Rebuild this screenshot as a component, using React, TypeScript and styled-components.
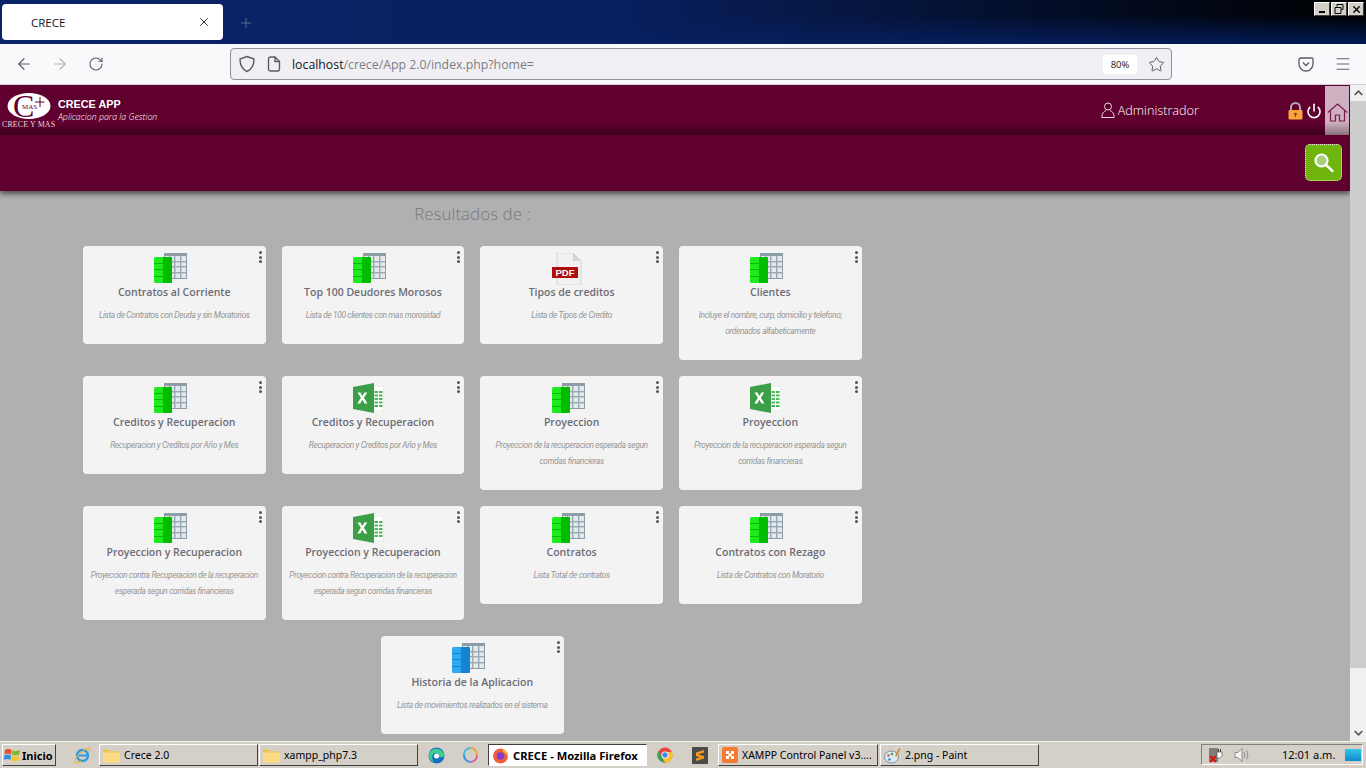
import React from "react";
import styled, { createGlobalStyle } from "styled-components";
import { ArrowLeft, ArrowRight, RotateCw, Star, X, Plus, Menu, Power } from "lucide-react";

const GlobalStyle = createGlobalStyle`
  html, body {
    margin: 0;
    padding: 0;
    width: 1366px;
    height: 768px;
    overflow: hidden;
    font-family: "Open Sans", sans-serif;
  }
  * { box-sizing: border-box; }
`;

const Screen = styled.div`
  width: 1366px;
  height: 768px;
  display: flex;
  flex-direction: column;
  overflow: hidden;
`;

/* firefox chrome */
const TabStrip = styled.div`
  height: 44px;
  display: flex;
  background:
    linear-gradient(to right, #0a246a 0%, #08205f 45%, rgba(6, 28, 88, 0) 100%),
    linear-gradient(180deg, #000 0%, #000 35%, #011b55 100%);
`;

const Tab = styled.div`
  width: 221px;
  height: 36px;
  margin: 4px 0 0 2px;
  padding: 0 12px 0 29px;
  background: #fff;
  border-radius: 4px;
  display: flex;
  align-items: center;
  justify-content: space-between;
  font-size: 11.5px;
  color: #15141a;
`;

const NewTab = styled.div`
  margin: 14px 0 0 15px;
  color: #5c6a8e;
  height: 16px;
`;

const WindowButtons = styled.div`
  margin: 2px 2px 0 auto;
  display: flex;
  gap: 1px;
`;

const WindowButton = styled.div`
  width: 16px;
  height: 14px;
  background: #d4d0c8;
  border: 1px solid;
  border-color: #fff #404040 #404040 #fff;
  display: flex;
  align-items: center;
  justify-content: center;
  color: #000;
`;

const Toolbar = styled.div`
  height: 41px;
  background: #f9f9fb;
  border-bottom: 1px solid #d0d0d6;
  display: flex;
  align-items: center;
  padding-left: 6px;
`;

const NavButton = styled.div<{ $muted?: boolean }>`
  width: 36px;
  display: flex;
  justify-content: center;
  color: ${({ $muted }) => ($muted ? "#b5b5ba" : "#5b5b66")};
`;

const AddressBar = styled.div`
  width: 942px;
  height: 32px;
  margin: 0 0 0 116px;
  padding: 0 6px 0 7px;
  background: #f0f0f4;
  border: 1px solid #8f8f9d;
  border-radius: 4px;
  display: flex;
  align-items: center;
  color: #5b5b66;
`;

const UrlText = styled.div`
  margin-left: 11px;
  font-size: 12.3px;
  color: #7c7c84;
  span { color: #15141a; }
`;

const ZoomBadge = styled.div`
  margin-left: auto;
  width: 34px;
  height: 19px;
  border-radius: 3px;
  background: #fff;
  font-size: 9.5px;
  color: #15141a;
  display: flex;
  align-items: center;
  justify-content: center;
`;

const StarSlot = styled.div`
  margin-left: 11px;
  height: 17px;
`;

const ToolbarRight = styled.div`
  margin-left: 126px;
  display: flex;
  align-items: center;
  gap: 20px;
  color: #5b5b66;
`;

/* page */
const Viewport = styled.div`
  height: 656px;
  display: flex;
`;

const Page = styled.div`
  width: 1350px;
  background: #b0b0b0;
  display: flex;
  flex-direction: column;
  overflow: hidden;
`;

const TopBar = styled.header`
  height: 50px;
  flex: none;
  display: flex;
  align-items: stretch;
  background: linear-gradient(180deg, #60002e 0%, #60002e 76%, #3f001e 100%);
`;

const Brand = styled.div`
  margin-left: 2px;
  display: flex;
  align-items: flex-start;
  padding-top: 2px;
`;

const BrandText = styled.div`
  margin: 10px 0 0 2px;
  color: #fff;
  h1 {
    margin: 0;
    font: bold 10.8px/14px "Liberation Sans", sans-serif;
  }
  p {
    margin: 0;
    font: italic 300 8.8px/12px "Open Sans", sans-serif;
  }
`;

const UserBox = styled.div`
  margin-left: auto;
  display: flex;
  align-items: center;
  gap: 3px;
  height: 50px;
  color: #fff;
  font-weight: 300;
  font-size: 12.7px;
`;

const IconSlot = styled.div<{ $gap: number }>`
  margin-left: ${({ $gap }) => $gap}px;
  margin-top: 17px;
  height: 18px;
  color: #fff;
`;

const HomeButton = styled.div`
  width: 24px;
  margin: 1px 1px 0 3px;
  display: flex;
  justify-content: center;
  padding-top: 17px;
  background: linear-gradient(180deg, #cfb0c0 0%, #cfb0c0 74%, #8d7380 100%);
`;

const SearchBar = styled.div`
  height: 56px;
  flex: none;
  padding: 9px 8px 0 0;
  display: flex;
  justify-content: flex-end;
  background: #60002e;
  box-shadow: 0 3px 5px rgba(0, 0, 0, 0.55);
  position: relative;
`;

const SearchButton = styled.div`
  width: 37px;
  height: 37px;
  border-radius: 5px;
  background: #70b50e;
  border: 1px dotted #e8e8d8;
  display: flex;
  align-items: center;
  justify-content: center;
`;

const Results = styled.main`
  width: 779px;
  margin-left: 82.8px;
`;

const ResultsTitle = styled.h2`
  margin: 12px 0 21px;
  height: 22px;
  text-align: center;
  font-weight: 300;
  font-size: 17px;
  line-height: 22px;
  color: #7a7a7a;
`;

const CardGrid = styled.div`
  display: flex;
  flex-wrap: wrap;
  justify-content: center;
  align-items: flex-start;
  gap: 16px;
`;

const CardBox = styled.article`
  position: relative;
  width: 182.7px;
  padding: 7px 8px 21px;
  background: #f3f3f3;
  border-radius: 4px;
  text-align: center;
`;

const CardIcon = styled.div`
  width: 34px;
  height: 32px;
  margin: 0 auto;
  transform: translateX(-4px);
`;

const CardTitle = styled.h3`
  margin: 0;
  height: 16px;
  font-weight: 600;
  font-size: 10.5px;
  line-height: 15px;
  color: #6c6c76;
`;

const CardText = styled.p`
  margin: 6px -2px 0;
  font-family: "Roboto", sans-serif;
  font-style: italic;
  font-weight: 400;
  font-size: 8.4px;
  line-height: 16px;
  letter-spacing: -0.36px;
  color: #969696;
`;

const Kebab = styled.div`
  position: absolute;
  top: 5px;
  right: 4px;
  display: flex;
  flex-direction: column;
  gap: 1.5px;
  i {
    width: 3px;
    height: 3px;
    border-radius: 50%;
    background: #555;
  }
`;

const Scrollbar = styled.div`
  width: 16px;
  background: #f0f0f0;
  display: flex;
  flex-direction: column;
  align-items: center;
  justify-content: space-between;
`;

const ScrollThumb = styled.div`
  width: 16px;
  height: 567px;
  background: #cdcdcd;
`;

const ScrollArrow = styled.div`
  width: 16px;
  height: 16px;
  background: #f0f0f0;
  display: flex;
  align-items: center;
  justify-content: center;
`;

/* windows taskbar */
const Taskbar = styled.footer`
  height: 27px;
  background: #d4d0c8;
  border-top: 1px solid #f6f5f2;
  padding: 2px 3px 0 2px;
  display: flex;
  align-items: flex-start;
  font-family: "Noto Sans", sans-serif;
  font-size: 10.5px;
  color: #000;
`;

const StartButton = styled.div`
  width: 54px;
  height: 22px;
  border: 1px solid;
  border-color: #fff #404040 #404040 #fff;
  display: flex;
  align-items: center;
  gap: 1px;
  padding-left: 1px;
  font-size: 11px;
  font-weight: 700;
`;

const QuickIcon = styled.div<{ $left: number }>`
  margin-left: ${({ $left }) => $left}px;
  width: 18px;
  height: 22px;
  display: flex;
  align-items: center;
  justify-content: center;
`;

const TaskButton = styled.div<{ $w: number; $left?: number; $active?: boolean }>`
  width: ${({ $w }) => $w}px;
  height: 22px;
  margin-left: ${({ $left }) => $left ?? 1}px;
  padding-left: 3px;
  display: flex;
  align-items: center;
  gap: 4px;
  white-space: nowrap;
  overflow: hidden;
  border: 1px solid;
  border-color: ${({ $active }) =>
    $active ? "#404040 #fff #fff #404040" : "#fff #404040 #404040 #fff"};
  background: ${({ $active }) => ($active ? "#fff" : "#d4d0c8")};
  font-weight: ${({ $active }) => ($active ? 700 : 400)};
  font-size: ${({ $active }) => ($active ? "11.2px" : "10.5px")};
`;

const Tray = styled.div`
  margin-left: auto;
  width: 162px;
  height: 21px;
  border: 1px solid;
  border-color: #808080 #fff #fff #808080;
  padding: 0 1px 0 6px;
  display: flex;
  align-items: center;
`;

const TraySpacer = styled.div`
  width: 10px;
`;

const Clock = styled.span`
  margin-left: 32px;
  font-size: 11px;
`;

const DesktopTile = styled.div`
  margin-left: auto;
  width: 16px;
  height: 12px;
  background: linear-gradient(180deg, #35c4ea 0%, #0f8ccb 100%);
`;

/* drawings */
const SheetIcon: React.FC<{ tone: "green" | "blue" }> = ({ tone }) => {
  const [light, dark] = tone === "green" ? ["#1eea1e", "#00bb00"] : ["#2ea8ee", "#1583d4"];
  return (
    <svg width="34" height="32" viewBox="0 0 34 32">
      <rect x="11" y="0" width="23" height="26" fill="#8d9ea9" />
      <rect x="12" y="3" width="21" height="22" fill="#e4e9ec" />
      {[16, 21, 27].map((x) => (
        <rect key={x} x={x} y="3" width="1.4" height="22" fill="#9aa9b3" />
      ))}
      {[8, 13, 19].map((y) => (
        <rect key={y} x="12" y={y} width="21" height="1.4" fill="#9aa9b3" />
      ))}
      <rect x="1" y="4" width="18" height="26" rx="1.5" fill={light} />
      <rect x="10" y="4" width="9" height="26" rx="1" fill={dark} />
      {[10, 16, 23].map((y) => (
        <rect key={y} x="1" y={y} width="9" height="1" fill={dark} />
      ))}
    </svg>
  );
};

const ExcelIcon: React.FC = () => (
  <svg width="34" height="32" viewBox="0 0 34 32">
    <path d="M22 3.500h9.500v24H22z" fill="#fff" stroke="#dff0e2" strokeWidth="0.800" />
    {[8, 11.500, 15, 18.500, 22].map((y) => (
      <g key={y}>
        <rect x="22.500" y={y} width="3.500" height="2" fill="#4fb45a" />
        <rect x="27" y={y} width="3.500" height="2" fill="#4fb45a" />
      </g>
    ))}
    <path d="M1 4 22 0v30L1 26z" fill="#3c9f47" />
    <path d="M5.500 9.500h2.900l2 3.400 2-3.400h2.800l-3.300 5.300 3.500 5.700h-2.900l-2.100-3.700-2.200 3.700H5.300l3.600-5.700z" fill="#fff" />
  </svg>
);

const PdfIcon: React.FC = () => (
  <svg width="34" height="32" viewBox="0 0 34 32">
    <path d="M6 0h16l8 8v24H6z" fill="#f1f1f1" stroke="#d6d6d6" />
    <path d="M22 0v8h8z" fill="#d4d4d4" />
    <rect x="1" y="14" width="26" height="11" fill="#b00d0d" />
    <text x="14" y="23" textAnchor="middle" fontFamily="Liberation Sans, sans-serif" fontWeight="700" fontSize="9.500" fill="#fff">PDF</text>
  </svg>
);

const Logo: React.FC = () => (
  <svg width="54" height="45" viewBox="0 -3 54 45">
    <ellipse cx="27" cy="16" rx="21.500" ry="13" fill="#fff" />
    <text x="11" y="27" fontFamily="Liberation Serif, serif" fontSize="32" fill="#60002e">C</text>
    <text x="20" y="19" fontFamily="Liberation Serif, serif" fontSize="7" fill="#60002e">MAS</text>
    <path d="M37.500 7h1v10h-1zM33 11.500h9.500v1H33z" fill="#60002e" />
    <text x="0" y="37" fontFamily="Liberation Serif, serif" fontSize="7.900" letterSpacing="0.150" fill="#e6d2dc">CRECE Y MAS</text>
  </svg>
);

const UserIcon: React.FC = () => (
  <svg width="14" height="16" viewBox="0 0 14 16" fill="none" stroke="#e8d6df" strokeWidth="1">
    <circle cx="7" cy="4.500" r="3.500" />
    <path d="M5 8.500C2.500 9.500.8 11.500.8 15.500h12.400c0-4-1.700-6-4.200-7" />
  </svg>
);

const LockIcon: React.FC = () => (
  <svg width="15" height="18" viewBox="0 0 15 18">
    <path d="M3 9V5.500a4.500 4.500 0 0 1 9 0V9" fill="none" stroke="#b5a6b4" strokeWidth="2" />
    <rect x="0.500" y="8" width="14" height="9.500" rx="1" fill="#fba33a" />
    <circle cx="7.500" cy="12" r="1.300" fill="#5a4a3a" />
    <rect x="7" y="12" width="1" height="3" fill="#5a4a3a" />
  </svg>
);

const HomeIcon: React.FC = () => (
  <svg width="21" height="19" viewBox="0 0 21 19" fill="none" stroke="#7a1a48" strokeWidth="1.200">
    <path d="M.8 9.500 10.500 1l9.700 8.500" />
    <path d="M3.500 8v10h5v-6h4v6h5V8" />
  </svg>
);

const LensIcon: React.FC = () => (
  <svg width="20" height="20" viewBox="0 0 20 20">
    <circle cx="7.500" cy="7.500" r="6" fill="#a5cf78" stroke="#fff" strokeWidth="2.200" />
    <path d="m12 12 6.500 6" stroke="#fff" strokeWidth="2.400" strokeLinecap="round" />
  </svg>
);

const ShieldIcon: React.FC = () => (
  <svg width="18" height="18" viewBox="0 0 18 18" fill="none" stroke="#5b5b66" strokeWidth="1.400">
    <path d="M9 1.500 16 4c0 7-2.500 10.500-7 12.500C4.500 14.500 2 11 2 4z" />
  </svg>
);

const DocIcon = styled.svg`
  margin-left: 11px;
`;

const PageIcon: React.FC = () => (
  <DocIcon width="14" height="16" viewBox="0 0 14 16" fill="none" stroke="#5b5b66" strokeWidth="1.400">
    <path d="M1.500 3a2 2 0 0 1 2-2H8l4.500 4.500V13a2 2 0 0 1-2 2h-7a2 2 0 0 1-2-2z" />
    <path d="M8 1v4.500h4.500" />
  </DocIcon>
);

const PocketIcon: React.FC = () => (
  <svg width="16" height="15" viewBox="0 0 16 15" fill="none" stroke="#5b5b66" strokeWidth="1.300">
    <path d="M1 2.500A1.500 1.500 0 0 1 2.500 1h11A1.500 1.500 0 0 1 15 2.500V7a7 7 0 0 1-14 0z" />
    <path d="m5 5.500 3 3 3-3" />
  </svg>
);

const FlagIcon: React.FC = () => (
  <svg width="17" height="16" viewBox="0 0 17 16">
    <path d="M1 3c2-1.500 4-1.500 6.500 0L7 7.500C5 6 3 6 .5 7.500z" fill="#e8502a" />
    <path d="M8.500 3.200c2 1.300 4.500 1.300 7.500-.2l-.7 4.600c-2.600 1.300-5 1.200-7.300 0z" fill="#7fba2b" />
    <path d="M.4 8.500C3 7 5 7 7 8.500L6.400 13C4.400 11.500 2.400 11.500 0 13z" fill="#2f8ee0" />
    <path d="M8 8.700c2.200 1.200 4.600 1.300 7.200 0l-.7 4.500c-2.500 1.300-5 1.200-7.100 0z" fill="#f7c325" />
  </svg>
);

const FolderIcon: React.FC = () => (
  <svg width="17" height="15" viewBox="0 0 17 15">
    <path d="M0 1.500h6l1.500 2H17v11H0z" fill="#f2c14e" />
    <rect x="0" y="4.500" width="17" height="10" fill="#fbdc86" />
  </svg>
);

const IeIcon: React.FC = () => (
  <svg width="17" height="17" viewBox="0 0 17 17" fill="none">
    <circle cx="8.500" cy="8.500" r="5.500" stroke="#2f9be0" strokeWidth="2.400" />
    <path d="M4 8.500h10" stroke="#2f9be0" strokeWidth="2" />
    <path d="M1 15C0 12 8 2 15 1c2 .5 1 3 0 4M1 15c1.500 1.500 4 .5 6-1" stroke="#f0b429" strokeWidth="1.100" />
  </svg>
);

const EdgeIcon: React.FC = () => (
  <svg width="17" height="17" viewBox="0 0 17 17">
    <circle cx="8.500" cy="8.500" r="8" fill="#1570c4" />
    <path d="M1 7C3 1 13-1 16.500 8c0 2-3 2.500-5.500 2 1-2-1-4.500-4-4C4 7 3 11 6 15 3 14 .5 11 1 7z" fill="#3ecf8e" />
    <circle cx="8.500" cy="9" r="2.500" fill="#fff" />
  </svg>
);

const RingIcon: React.FC = () => (
  <svg width="17" height="18" viewBox="0 0 17 18" fill="none" strokeWidth="2">
    <path d="M8.500 2a6.500 6.500 0 0 1 6.500 7" stroke="#f0a030" />
    <path d="M15 9a6.500 6.500 0 0 1-6.500 7" stroke="#ea5a9a" />
    <path d="M8.500 16A6.500 6.500 0 0 1 2 9" stroke="#3a90e8" />
    <path d="M2 9a6.500 6.500 0 0 1 6.500-7" stroke="#48b9d8" />
  </svg>
);

const FirefoxIcon: React.FC = () => (
  <svg width="17" height="18" viewBox="0 0 17 18">
    <circle cx="8.500" cy="10" r="7.500" fill="#f0603a" />
    <path d="M8.500 2.500c5 1 8 4.500 7.500 9-1-3-3-5-5-5.500.5-1.500 0-2.500-2.500-3.500z" fill="#ffc02e" />
    <circle cx="8.500" cy="10" r="3.800" fill="#7a3fd0" />
  </svg>
);

const ChromeIcon: React.FC = () => (
  <svg width="16" height="16" viewBox="0 0 16 16">
    <circle cx="8" cy="8" r="7.500" fill="#e8453c" />
    <path d="M1.500 4 8 15.500A7.500 7.500 0 0 1 1.500 4z" fill="#34a853" />
    <path d="M15 5H8l-3 5 3 5.500A7.500 7.500 0 0 0 15 5z" fill="#fbc02d" />
    <circle cx="8" cy="8" r="3.600" fill="#fff" />
    <circle cx="8" cy="8" r="2.700" fill="#4285f4" />
  </svg>
);

const SublimeIcon: React.FC = () => (
  <svg width="16" height="17" viewBox="0 0 16 17">
    <rect width="16" height="17" rx="1" fill="#4a4a48" />
    <path d="M4 5.500 12 3v2.600L4 8zM4 6.500l8 2.800v2.400l-8-2.800zM4 11.400 12 9v2.600L4 14z" fill="#f59b1c" />
  </svg>
);

const XamppIcon: React.FC = () => (
  <svg width="16" height="16" viewBox="0 0 16 16">
    <rect width="16" height="16" rx="2" fill="#f47c30" />
    <path d="M4 4h3v2.500h2V4h3v3h-2.500v2H12v3H9V9.500H7V12H4V9h2.500V7H4z" fill="#fff" />
  </svg>
);

const PaintIcon: React.FC = () => (
  <svg width="17" height="17" viewBox="0 0 17 17">
    <ellipse cx="7.500" cy="10" rx="7" ry="6" fill="#dcebf2" stroke="#7a93a8" />
    <circle cx="4.500" cy="8.500" r="1.300" fill="#e05050" />
    <circle cx="8" cy="7" r="1.300" fill="#40a060" />
    <circle cx="5.500" cy="12.500" r="1.300" fill="#3a80d0" />
    <path d="m11 9 4-8 1.500 1-4 8z" fill="#d88a30" />
  </svg>
);

const PowerTrayIcon: React.FC = () => (
  <svg width="16" height="17" viewBox="0 0 16 17">
    <rect x="1" y="2" width="9" height="14" rx="1" fill="#7d7d7d" />
    <path d="M9 6h5v4l-2 2H9z" fill="#fff" stroke="#444" strokeWidth="0.600" />
    <path d="M10.500 3v3M12.500 3v3" stroke="#444" />
    <path d="m2 10 6 6M8 10l-6 6" stroke="#e01010" strokeWidth="2" />
  </svg>
);

const SpeakerIcon: React.FC = () => (
  <svg width="16" height="16" viewBox="0 0 16 16" fill="none" stroke="#8a8a8a">
    <path d="M1 5.500h3L8 1.500v13l-4-4H1z" fill="#f2f2f2" />
    <path d="M10 5c1 1.800 1 4.200 0 6M12.500 3.500c1.800 2.700 1.800 6.300 0 9" />
  </svg>
);

type CardData = {
  title: string;
  text: string;
  icon: "green" | "blue" | "excel" | "pdf";
};

const cards: CardData[] = [
  { title: "Contratos al Corriente", text: "Lista de Contratos con Deuda y sin Moratorios", icon: "green" },
  { title: "Top 100 Deudores Morosos", text: "Lista de 100 clientes con mas morosidad", icon: "green" },
  { title: "Tipos de creditos", text: "Lista de Tipos de Credito", icon: "pdf" },
  { title: "Clientes", text: "Incluye el nombre, curp, domicilio y telefono; ordenados alfabeticamente", icon: "green" },
  { title: "Creditos y Recuperacion", text: "Recuperacion y Creditos por Año y Mes", icon: "green" },
  { title: "Creditos y Recuperacion", text: "Recuperacion y Creditos por Año y Mes", icon: "excel" },
  { title: "Proyeccion", text: "Proyeccion de la recuperacion esperada segun corridas financieras", icon: "green" },
  { title: "Proyeccion", text: "Proyeccion de la recuperacion esperada segun corridas financieras", icon: "excel" },
  { title: "Proyeccion y Recuperacion", text: "Proyeccion contra Recuperacion de la recuperacion esperada segun corridas financieras", icon: "green" },
  { title: "Proyeccion y Recuperacion", text: "Proyeccion contra Recuperacion de la recuperacion esperada segun corridas financieras", icon: "excel" },
  { title: "Contratos", text: "Lista Total de contratos", icon: "green" },
  { title: "Contratos con Rezago", text: "Lista de Contratos con Moratorio", icon: "green" },
  { title: "Historia de la Aplicacion", text: "Lista de movimientos realizados en el sistema", icon: "blue" },
];

const ReportCard: React.FC<{ card: CardData }> = ({ card }) => (
  <CardBox>
    <Kebab>
      <i />
      <i />
      <i />
    </Kebab>
    <CardIcon>
      {card.icon === "excel" && <ExcelIcon />}
      {card.icon === "pdf" && <PdfIcon />}
      {(card.icon === "green" || card.icon === "blue") && <SheetIcon tone={card.icon} />}
    </CardIcon>
    <CardTitle>{card.title}</CardTitle>
    <CardText>{card.text}</CardText>
  </CardBox>
);

const App: React.FC = () => {
  return (
    <Screen>
      <GlobalStyle />
      <TabStrip>
        <Tab>
          CRECE
          <X size={14} strokeWidth={1.5} color="#15141a" />
        </Tab>
        <NewTab>
          <Plus size={16} strokeWidth={1.5} />
        </NewTab>
        <WindowButtons>
          <WindowButton>
            <svg width="10" height="10" viewBox="0 0 10 10">
              <rect x="2" y="7" width="6" height="2" fill="#000" />
            </svg>
          </WindowButton>
          <WindowButton>
            <svg width="10" height="10" viewBox="0 0 10 10" fill="none" stroke="#000">
              <path d="M3 2.500V.5h6v5H7.500" />
              <path d="M1 3.500h6v6H1z" />
            </svg>
          </WindowButton>
          <WindowButton>
            <X size={11} strokeWidth={3} />
          </WindowButton>
        </WindowButtons>
      </TabStrip>

      <Toolbar>
        <NavButton>
          <ArrowLeft size={18} strokeWidth={1.5} />
        </NavButton>
        <NavButton $muted>
          <ArrowRight size={18} strokeWidth={1.5} />
        </NavButton>
        <NavButton>
          <RotateCw size={16} strokeWidth={1.6} />
        </NavButton>
        <AddressBar>
          <ShieldIcon />
          <PageIcon />
          <UrlText>
            <span>localhost</span>/crece/App 2.0/index.php?home=
          </UrlText>
          <ZoomBadge>80%</ZoomBadge>
          <StarSlot>
            <Star size={17} strokeWidth={1.4} />
          </StarSlot>
        </AddressBar>
        <ToolbarRight>
          <PocketIcon />
          <Menu size={18} strokeWidth={1.3} />
        </ToolbarRight>
      </Toolbar>

      <Viewport>
        <Page>
          <TopBar>
            <Brand>
              <Logo />
              <BrandText>
                <h1>CRECE APP</h1>
                <p>Aplicacion para la Gestion</p>
              </BrandText>
            </Brand>
            <UserBox>
              <UserIcon />
              Administrador
            </UserBox>
            <IconSlot $gap={89}>
              <LockIcon />
            </IconSlot>
            <IconSlot $gap={3}>
              <Power size={16} strokeWidth={2.4} />
            </IconSlot>
            <HomeButton>
              <HomeIcon />
            </HomeButton>
          </TopBar>
          <SearchBar>
            <SearchButton>
              <LensIcon />
            </SearchButton>
          </SearchBar>
          <Results>
            <ResultsTitle>Resultados de :</ResultsTitle>
            <CardGrid>
              {cards.map((card, i) => (
                <ReportCard key={i} card={card} />
              ))}
            </CardGrid>
          </Results>
        </Page>
        <Scrollbar>
          <div>
            <ScrollArrow>
              <svg width="9" height="6" viewBox="0 0 9 6" fill="none" stroke="#505050" strokeWidth="1.600">
                <path d="m.7 5 3.800-3.800L8.300 5" />
              </svg>
            </ScrollArrow>
            <ScrollThumb />
          </div>
          <ScrollArrow>
            <svg width="9" height="6" viewBox="0 0 9 6" fill="none" stroke="#505050" strokeWidth="1.600">
              <path d="m.7 1 3.800 3.800L8.300 1" />
            </svg>
          </ScrollArrow>
        </Scrollbar>
      </Viewport>

      <Taskbar>
        <StartButton>
          <FlagIcon />
          Inicio
        </StartButton>
        <QuickIcon $left={17}>
          <IeIcon />
        </QuickIcon>
        <TaskButton $w={159} $left={8}>
          <FolderIcon />
          Crece 2.0
        </TaskButton>
        <TaskButton $w={159}>
          <FolderIcon />
          xampp_php7.3
        </TaskButton>
        <QuickIcon $left={9}>
          <EdgeIcon />
        </QuickIcon>
        <QuickIcon $left={16}>
          <RingIcon />
        </QuickIcon>
        <TaskButton $w={159} $left={9} $active>
          <FirefoxIcon />
          CRECE - Mozilla Firefox
        </TaskButton>
        <QuickIcon $left={9}>
          <ChromeIcon />
        </QuickIcon>
        <QuickIcon $left={17}>
          <SublimeIcon />
        </QuickIcon>
        <TaskButton $w={160} $left={9}>
          <XamppIcon />
          XAMPP Control Panel v3....
        </TaskButton>
        <TaskButton $w={159} $left={2}>
          <PaintIcon />
          2.png - Paint
        </TaskButton>
        <Tray>
          <PowerTrayIcon />
          <TraySpacer />
          <SpeakerIcon />
          <Clock>12:01 a.m.</Clock>
          <DesktopTile />
        </Tray>
      </Taskbar>
    </Screen>
  );
};

export default App;
